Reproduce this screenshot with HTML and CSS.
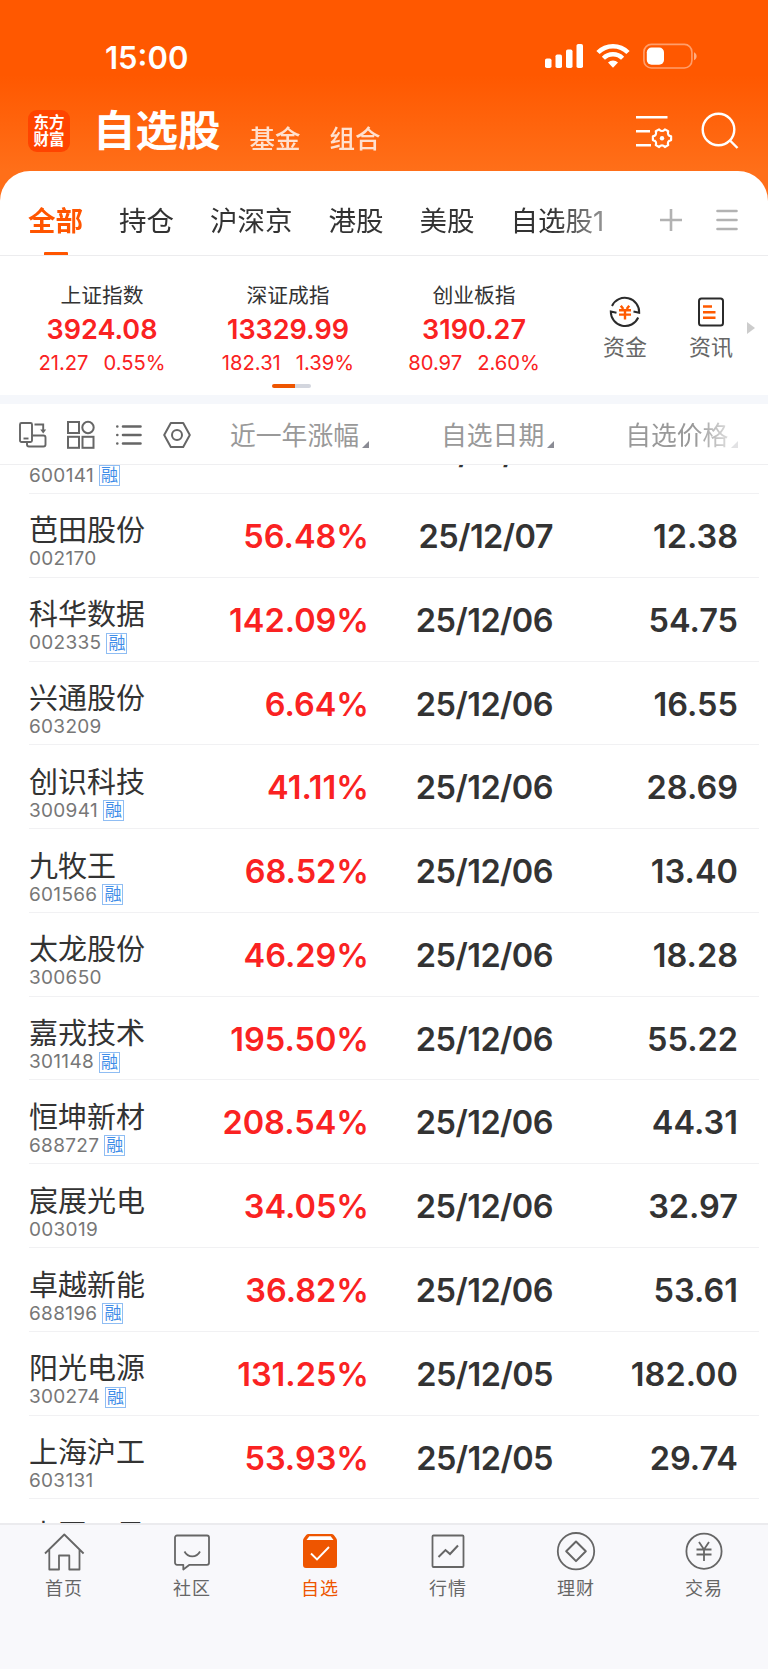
FILE: index.html
```html
<!DOCTYPE html>
<html lang="zh-CN">
<head>
  <meta charset="UTF-8">
  <meta name="viewport" content="width=device-width, initial-scale=1.0">
  <title>自选股</title>
  <link rel="stylesheet" href="styles.css">
</head>
<body>
  <header class="top">
    <div class="status-bar">
      <div class="clock">15:00</div>
      <svg class="status-icons" width="154" height="28" viewBox="0 0 154 28" fill="#fff">
        <rect x="0" y="16.5" width="6.5" height="9.5" rx="1.8"/>
        <rect x="10.5" y="12.5" width="6.5" height="13.5" rx="1.8"/>
        <rect x="21" y="7.5" width="6.5" height="18.5" rx="1.8"/>
        <rect x="31.5" y="2" width="6.5" height="24" rx="1.8"/>
        <path d="M53 10.5a21 21 0 0 1 30 0" fill="none" stroke="#fff" stroke-width="4.6"/>
        <path d="M58.4 16.2a13.5 13.5 0 0 1 19.2 0" fill="none" stroke="#fff" stroke-width="4.4"/>
        <path d="M63 20.6a7.2 7.2 0 0 1 10 0l-5 5.2z"/>
        <rect x="98.9" y="2.4" width="48" height="23.6" rx="7.5" fill="none" stroke="#fff" stroke-opacity=".42" stroke-width="1.6"/>
        <rect x="101.8" y="5.5" width="17.2" height="17.2" rx="4.8"/>
        <path d="M149 10.3c3.5 1.4 3.5 6.6 0 8z" fill-opacity=".5"/>
      </svg>
    </div>
    <div class="title-bar">
      <div class="logo">东方<br>财富</div>
      <h1>自选股</h1>
      <a class="sub">基金</a>
      <a class="sub">组合</a>
      <svg class="ico-settings" width="40" height="36" viewBox="0 0 40 36" fill="none" stroke="#fff" stroke-width="2.6">
        <path d="M1 4.2H32.5M1 18.2H15M1 32.2H16"/>
        <path transform="translate(27 25.2)" d="M9.1-1.9V1.9Q4.85 2.8 6.2 6.9L2.9 8.8Q0 5.6-2.9 8.8L-6.2 6.9Q-4.85 2.8-9.1 1.9V-1.9Q-4.85-2.8-6.2-6.9L-2.9-8.8Q0-5.6 2.9-8.8L6.2-6.9Q4.85-2.8 9.1-1.9Z" stroke-width="2.2" stroke-linejoin="round"/>
        <circle cx="27" cy="25.2" r="2.2" fill="#fff" stroke="none"/>
      </svg>
      <svg class="ico-search" width="38" height="38" viewBox="0 0 38 38" fill="none" stroke="#fff" stroke-width="2.4">
        <circle cx="17.5" cy="17.5" r="15.8"/>
        <path d="M29 28.5l7.5 7.5"/>
      </svg>
    </div>
  </header>

  <main class="sheet">
    <nav class="groups">
      <div class="group-list">
        <a class="active">全部</a>
        <a>持仓</a>
        <a>沪深京</a>
        <a>港股</a>
        <a>美股</a>
        <a>自选股1</a>
      </div>
      <svg width="24" height="24" viewBox="0 0 24 24" stroke="#b2b2b2" stroke-width="2.6"><path d="M12 1v22M1 12h22"/></svg>
      <svg class="menu" width="22" height="24" viewBox="0 0 22 24" stroke="#b2b2b2" stroke-width="2.6" stroke-linecap="round"><path d="M1.5 3h19M1.5 12h19M1.5 21h19"/></svg>
    </nav>

    <section class="indices">
      <div class="index">
        <div class="index-name">上证指数</div>
        <div class="index-value">3924.08</div>
        <div class="index-change"><span>21.27</span><span>0.55%</span></div>
      </div>
      <div class="index">
        <div class="index-name">深证成指</div>
        <div class="index-value">13329.99</div>
        <div class="index-change"><span>182.31</span><span>1.39%</span></div>
        <div class="pager"></div>
      </div>
      <div class="index">
        <div class="index-name">创业板指</div>
        <div class="index-value">3190.27</div>
        <div class="index-change"><span>80.97</span><span>2.60%</span></div>
      </div>
      <div class="shortcut">
        <svg width="34" height="34" viewBox="0 0 34 34" fill="none" stroke="#2b2b2b" stroke-width="2">
          <path d="M4 11A14.3 14.3 0 0 1 31.2 17.8L25.5 16.5"/>
          <path d="M30.2 22.5A14.3 14.3 0 0 1 2.8 16.6L8.5 17.8"/>
          <path d="M12.8 10.8l2.5 3.2M21.2 10.8l-2.5 3.2M11 15.2h12M11 19.6h12M17 15v9.5" stroke="#ff5a00" stroke-width="2.4"/>
        </svg>
        <div>资金</div>
      </div>
      <div class="shortcut">
        <svg width="34" height="34" viewBox="0 0 34 34" fill="none" stroke="#2b2b2b" stroke-width="2">
          <rect x="5" y="3.5" width="24" height="27" rx="2.5"/>
          <path d="M9 11.5h9M9 17.2h12.5M9 22.8h12.5" stroke="#ff5a00" stroke-width="2.4"/>
        </svg>
        <div>资讯</div>
      </div>
      <div class="more"></div>
    </section>

    <section class="table-head">
      <svg width="28" height="28" viewBox="0 0 28 28" fill="none" stroke="#666" stroke-width="1.9">
        <rect x="1" y="2" width="12" height="19" rx="1.5"/>
        <path d="M4.5 17.5h5"/>
        <path d="M13.5 14.5H24.5a2 2 0 0 1 2 2V23.5a2 2 0 0 1-2 2H10a2 2 0 0 1-2-2V21"/>
        <path d="M15.5 3.5H24.2V10"/>
        <path d="M21.2 8.5h6l-3 4z" fill="#666" stroke="none"/>
      </svg>
      <svg width="28" height="28" viewBox="0 0 28 28" fill="none" stroke="#666" stroke-width="2">
        <rect x="1" y="1" width="11" height="11"/>
        <circle cx="21" cy="6.5" r="5.7"/>
        <rect x="1" y="15.8" width="11" height="11"/>
        <rect x="15.5" y="15.8" width="11" height="11"/>
      </svg>
      <svg width="28" height="28" viewBox="0 0 28 28" fill="none" stroke="#666" stroke-width="2.6" stroke-linecap="round">
        <path d="M8 5.5h17.5M8 14h17.5M8 22.5h17.5M2.3 5.5h.01M2.3 14h.01M2.3 22.5h.01"/>
      </svg>
      <svg width="28" height="28" viewBox="0 0 28 28" fill="none" stroke="#666" stroke-width="2" stroke-linejoin="round">
        <path d="M7.8 2h12.4L26.8 14l-6.6 12H7.8L1.2 14z"/>
        <circle cx="14" cy="14" r="5"/>
      </svg>
      <div class="col col-change">近一年涨幅</div>
      <div class="col col-date">自选日期</div>
      <div class="col col-price">自选价格</div>
    </section>

    <section class="list">
      <div class="row">
        <div><div class="name"></div><div class="code">600141<i>融</i></div></div>
        <div></div>
        <div class="num date">25/12/07</div>
        <div></div>
      </div>
      <div class="row">
        <div><div class="name">芭田股份</div><div class="code">002170</div></div>
        <div class="num up">56.48%</div>
        <div class="num date">25/12/07</div>
        <div class="num">12.38</div>
      </div>
      <div class="row">
        <div><div class="name">科华数据</div><div class="code">002335<i>融</i></div></div>
        <div class="num up">142.09%</div>
        <div class="num date">25/12/06</div>
        <div class="num">54.75</div>
      </div>
      <div class="row">
        <div><div class="name">兴通股份</div><div class="code">603209</div></div>
        <div class="num up">6.64%</div>
        <div class="num date">25/12/06</div>
        <div class="num">16.55</div>
      </div>
      <div class="row">
        <div><div class="name">创识科技</div><div class="code">300941<i>融</i></div></div>
        <div class="num up">41.11%</div>
        <div class="num date">25/12/06</div>
        <div class="num">28.69</div>
      </div>
      <div class="row">
        <div><div class="name">九牧王</div><div class="code">601566<i>融</i></div></div>
        <div class="num up">68.52%</div>
        <div class="num date">25/12/06</div>
        <div class="num">13.40</div>
      </div>
      <div class="row">
        <div><div class="name">太龙股份</div><div class="code">300650</div></div>
        <div class="num up">46.29%</div>
        <div class="num date">25/12/06</div>
        <div class="num">18.28</div>
      </div>
      <div class="row">
        <div><div class="name">嘉戎技术</div><div class="code">301148<i>融</i></div></div>
        <div class="num up">195.50%</div>
        <div class="num date">25/12/06</div>
        <div class="num">55.22</div>
      </div>
      <div class="row">
        <div><div class="name">恒坤新材</div><div class="code">688727<i>融</i></div></div>
        <div class="num up">208.54%</div>
        <div class="num date">25/12/06</div>
        <div class="num">44.31</div>
      </div>
      <div class="row">
        <div><div class="name">宸展光电</div><div class="code">003019</div></div>
        <div class="num up">34.05%</div>
        <div class="num date">25/12/06</div>
        <div class="num">32.97</div>
      </div>
      <div class="row">
        <div><div class="name">卓越新能</div><div class="code">688196<i>融</i></div></div>
        <div class="num up">36.82%</div>
        <div class="num date">25/12/06</div>
        <div class="num">53.61</div>
      </div>
      <div class="row">
        <div><div class="name">阳光电源</div><div class="code">300274<i>融</i></div></div>
        <div class="num up">131.25%</div>
        <div class="num date">25/12/05</div>
        <div class="num">182.00</div>
      </div>
      <div class="row">
        <div><div class="name">上海沪工</div><div class="code">603131</div></div>
        <div class="num up">53.93%</div>
        <div class="num date">25/12/05</div>
        <div class="num">29.74</div>
      </div>
      <div class="row">
        <div><div class="name">中国卫星</div></div>
      </div>
    </section>
  </main>

  <nav class="tabbar">
    <a>
      <svg width="40" height="40" viewBox="0 0 40 40" fill="none" stroke="#666" stroke-width="1.8" stroke-linejoin="round">
        <path d="M1 20.5L20.3 1.5 39.6 20.5M5.3 17V36.5H15V22.5H25.3V36.5H35.5V17"/>
      </svg>
      <span>首页</span>
    </a>
    <a>
      <svg width="40" height="40" viewBox="0 0 40 40" fill="none" stroke="#666" stroke-width="1.8" stroke-linejoin="round">
        <path d="M5 2.5H35a2 2 0 0 1 2 2V29.8a2 2 0 0 1-2 2H17.5L11.3 36.5V31.8H5a2 2 0 0 1-2-2V4.5a2 2 0 0 1 2-2z"/>
        <path d="M12.5 18.5c3.5 6.5 12 6.5 15.500 0"/>
      </svg>
      <span>社区</span>
    </a>
    <a class="active">
      <svg width="40" height="40" viewBox="0 0 40 40">
        <path d="M8.500 1h23a3 3 0 0 1 2.300 1l2.400 3.300a4 4 0 0 1 .8 2.400V32a3 3 0 0 1-3 3H6a3 3 0 0 1-3-3V7.700a4 4 0 0 1 .8-2.400L6.200 2a3 3 0 0 1 2.300-1z" fill="#ee5500"/>
        <path d="M9.3 3.3h21.4l2.8 3.7H6.5z" fill="#fff"/>
        <path d="M11 20.5l6 6L29 14" fill="none" stroke="#fff" stroke-width="1.9"/>
      </svg>
      <span>自选</span>
    </a>
    <a>
      <svg width="40" height="40" viewBox="0 0 40 40" fill="none" stroke="#666" stroke-width="1.8">
        <rect x="4.5" y="2.5" width="31" height="31.5" rx="1"/>
        <path d="M10.5 24l7-7 4.5 4 8-8.5" stroke-width="2"/>
      </svg>
      <span>行情</span>
    </a>
    <a>
      <svg width="40" height="40" viewBox="0 0 40 40" fill="none" stroke="#666" stroke-width="1.8" stroke-linejoin="round">
        <circle cx="20" cy="18.2" r="18.2"/>
        <path d="M20 8.5L29.8 18.3 20 28.1 10.2 18.3z" stroke-width="2"/>
      </svg>
      <span>理财</span>
    </a>
    <a>
      <svg width="40" height="40" viewBox="0 0 40 40" fill="none" stroke="#666" stroke-width="1.8">
        <circle cx="20" cy="18.2" r="17.6"/>
        <path d="M15 9l5 7.5L25 9M12.5 16.5h15M12.5 21.5h15M20 16.5V28"/>
      </svg>
      <span>交易</span>
    </a>
  </nav>
</body>
</html>
```
FILE: styles.css
```css
* {
  box-sizing: border-box;
}
body {
  margin: 0;
  width: 768px;
  height: 1669px;
  overflow: hidden;
  display: flex;
  flex-direction: column;
  font-family: Inter, "Noto Sans CJK SC", sans-serif;
  color: #333;
  background: #fff;
}
svg {
  display: block;
  flex: none;
  overflow: visible;
}

/* header */
.top {
  height: 211px;
  margin-bottom: -40px;
  background: linear-gradient(#ff5800 0, #ff5800 75px, #ff6f19 171px, #ff6f19 100%);
}
.status-bar {
  height: 97px;
  padding: 42px 69px 0 105px;
  display: flex;
  justify-content: space-between;
}
.clock {
  padding-top: 1px;
  font-size: 31px;
  line-height: 30px;
  font-weight: 600;
  color: #fff;
}
.title-bar {
  height: 68px;
  padding: 0 29px 0 28px;
  display: flex;
  align-items: center;
  color: #fff;
}
.logo {
  width: 42px;
  height: 42px;
  border-radius: 9px;
  background: #ff4400;
  font-size: 15.5px;
  line-height: 17px;
  padding-top: 4px;
  font-weight: 700;
  text-align: center;
}
h1 {
  margin: 0 0 0 23px;
  font-size: 42.5px;
  line-height: 60px;
  font-weight: 700;
}
.sub {
  margin-left: 29px;
  padding-top: 16px;
  font-size: 25.5px;
  line-height: 36px;
  font-weight: 500;
  opacity: .8;
}
.ico-settings {
  margin-left: auto;
  margin-right: 26px;
}

/* white sheet */
.sheet {
  background: #fff;
  border-radius: 30px 30px 0 0;
}
.groups {
  height: 85px;
  padding: 14px 0 0 28px;
  display: flex;
  align-items: center;
  border-bottom: 1px solid #ececee;
}
.group-list {
  width: 590px;
  height: 70px;
  display: flex;
  gap: 36px;
  font-size: 27.5px;
  line-height: 72px;
  white-space: nowrap;
  -webkit-mask-image: linear-gradient(90deg, #000 525px, rgba(0, 0, 0, .5) 578px);
}
.group-list .active {
  color: #ff5500;
  font-weight: 700;
  display: flex;
  flex-direction: column;
  align-items: center;
}
.group-list .active::after {
  content: "";
  width: 24px;
  height: 4px;
  margin-top: -5px;
  flex: none;
  border-radius: 1px;
  background: #ff5500;
}
.groups svg {
  margin-left: 41px;
}
.groups .menu {
  margin-left: 33px;
}

/* indices */
.indices {
  height: 148px;
  padding-left: 9px;
  display: flex;
  border-bottom: 9px solid #f5f7fb;
}
.index {
  width: 186px;
  padding-top: 25px;
  display: flex;
  flex-direction: column;
  align-items: center;
}
.index-name {
  font-size: 20.8px;
  line-height: 30px;
}
.index-value {
  font-size: 27px;
  line-height: 38px;
  font-weight: 600;
  color: #fa2222;
}
.index-change {
  font-size: 20.2px;
  line-height: 28px;
  color: #fa2222;
  display: flex;
  gap: 15px;
}
.pager {
  width: 39px;
  height: 4px;
  margin: 7px 0 0 7px;
  border-radius: 2px;
  background: linear-gradient(90deg, #ee5500 23px, #d3d6de 23px);
}
.shortcut {
  width: 86px;
  padding-top: 39px;
  display: flex;
  flex-direction: column;
  align-items: center;
  font-size: 22px;
  line-height: 36px;
  color: #666;
}
.index + .shortcut {
  margin-left: 15px;
}
.more {
  width: 0;
  height: 0;
  margin: 66px 0 0 -7px;
  border-left: 8px solid #ccc;
  border-top: 6px solid transparent;
  border-bottom: 6px solid transparent;
}

/* table */
.table-head {
  height: 61px;
  padding: 1px 0 0 19px;
  display: flex;
  align-items: center;
  gap: 20px;
  border-bottom: 1px solid #efeff1;
}
.col {
  padding-top: 2px;
  display: flex;
  align-items: flex-end;
  font-size: 25.8px;
  line-height: 36px;
  color: #999;
  white-space: nowrap;
}
.col::after {
  content: "";
  border-left: 7px solid transparent;
  border-bottom: 7px solid #8a8b94;
  margin: 0 0 6px 3px;
}
.col-change {
  margin-left: 19px;
}
.col-date {
  margin-left: 52px;
}
.col-price {
  margin-left: 51px;
  -webkit-mask-image: linear-gradient(90deg, #000 70px, rgba(0, 0, 0, .25) 108px);
}
.list {
  height: 1058px;
  overflow: hidden;
}
.row {
  height: 83.79px;
  margin: 0 9px 0 29px;
  display: grid;
  grid-template-columns: 162px 178px 184px 185px;
  border-bottom: 1px solid #f1f1f3;
}
.row:first-child {
  margin-top: -54.8px;
}
.name {
  height: 54px;
  padding-top: 20.5px;
  font-size: 29px;
  line-height: 34px;
}
.row:last-child .name {
  padding-top: 19.5px;
}
.code {
  height: 23px;
  display: flex;
  align-items: center;
  gap: 5px;
  font-size: 19px;
  line-height: 22px;
  letter-spacing: .3px;
  color: #777;
}
.code i {
  width: 21px;
  height: 21px;
  border: 1px solid #8fbdf3;
  font-size: 17px;
  line-height: 18px;
  letter-spacing: 0;
  font-style: normal;
  text-align: center;
  color: #3f8de8;
}
.num {
  padding-top: 23px;
  font-size: 32.5px;
  line-height: 40px;
  font-weight: 600;
  text-align: right;
}
.date {
  letter-spacing: -.55px;
}
.up {
  color: #fa2222;
}

/* bottom tabs */
.tabbar {
  flex: 1;
  padding-top: 8px;
  display: grid;
  grid-template-columns: repeat(6, 1fr);
  background: #f8f8fb;
  border-top: 2px solid #ebebee;
}
.tabbar a {
  display: flex;
  flex-direction: column;
  align-items: center;
  font-size: 18px;
  line-height: 31px;
  letter-spacing: 1px;
  color: #666;
}
.tabbar .active {
  color: #ee5500;
}
```
